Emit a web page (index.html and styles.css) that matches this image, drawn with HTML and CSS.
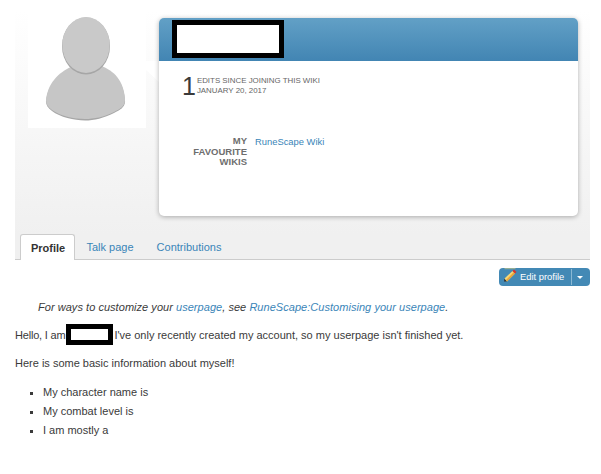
FILE: index.html
```html
<!DOCTYPE html>
<html lang="en">
<head>
    <meta charset="UTF-8">
    <title>User profile</title>
    <link rel="stylesheet" href="styles.css">
</head>
<body>
    <div class="page">
        <div class="masthead">
            <div class="avatar">
                <svg width="118" height="128" viewBox="0 0 118 128">
                    <path d="M18 101.500 C20 81 35 71 45 67 L73 67 C85 71 96 81 97 101.500 C97 107 92 110 86 113 C76 118 66 120.500 57 120.500 C46 120.500 32 117 24 111 C20 108 18 105 18 101.500 Z" fill="#a6a6a6"/>
                    <path d="M18 100 C20 80 35 70 45 66 L73 66 C85 70 96 80 97 100 C97 106 92 109 86 112 C76 117 66 119 57 119 C46 119 32 116 24 110 C20 107 18 104 18 100 Z" fill="#c6c6c6"/>
                    <ellipse cx="58" cy="46" rx="24" ry="28.500" fill="#a6a6a6"/>
                    <ellipse cx="58" cy="45" rx="23.700" ry="28" fill="#c9c9c9"/>
                </svg>
            </div>
            <div class="card">
                <div class="card-head">
                    <div class="redact redact-name"></div>
                </div>
                <div class="card-body">
                    <div class="edits">
                        <span class="edit-count">1</span>
                        <div class="edit-text">
                            <div>Edits since joining this wiki</div>
                            <div>January 20, 2017</div>
                        </div>
                    </div>
                    <div class="favourites">
                        <div class="fav-label">My Favourite Wikis</div>
                        <a class="link" href="#">RuneScape Wiki</a>
                    </div>
                </div>
            </div>
        </div>

        <ul class="tabs">
            <li class="tab tab-active">Profile</li>
            <li class="tab">Talk page</li>
            <li class="tab">Contributions</li>
        </ul>

        <div class="actions">
            <div class="edit-btn">
                <svg class="pencil" width="14" height="14" viewBox="0 0 14 14">
                    <path d="M1.500 0.700 L12.500 0.700" stroke="#a9b88f" stroke-width="1"/>
                    <path d="M4 13.500 L1 13.500 L1.500 10.500 Z" fill="#33302a"/>
                    <path d="M1.500 10.500 L9.500 3 L12 5.500 L4 13.500 Z" fill="#f7d774"/>
                    <path d="M3 12 L10.700 4.300 L12 5.500 L4 13.500 Z" fill="#e8a33a"/>
                    <path d="M9.500 3 L11 1.500 L13.500 4 L12 5.500 Z" fill="#d9342b"/>
                </svg>
                <span class="edit-label">Edit profile</span>
                <span class="edit-caret"></span>
            </div>
        </div>

        <div class="content">
            <p class="hint">For ways to customize your <a class="link" href="#">userpage</a>, see <a class="link" href="#">RuneScape:Customising your userpage</a>.</p>
            <p class="hello"><span class="hello-start">Hello, I am</span><span class="redact redact-inline"></span>I've only recently created my account, so my userpage isn't finished yet.</p>
            <p class="basics">Here is some basic information about myself!</p>
            <ul class="facts">
                <li>My character name is</li>
                <li>My combat level is</li>
                <li>I am mostly a</li>
            </ul>
        </div>
    </div>
</body>
</html>
```

FILE: styles.css
```css
body {
    margin: 0;
    background: white;
    font-family: "Liberation Sans", Arial, sans-serif;
    font-size: 12px;
    color: #3a3a3a;
    overflow: hidden;
}

.page {
    margin: 0 11px 0 15px;
}

.link {
    color: #3a85b8;
    text-decoration: none;
}

.redact {
    background: white;
    border: 5px solid black;
    box-sizing: border-box;
}

/* masthead */
.masthead {
    display: flex;
    height: 234px;
    background: linear-gradient(to bottom, #ffffff 0, #ffffff 10px, #f0f0f0 100%);
}

.avatar {
    width: 118px;
    height: 128px;
    margin-left: 13px;
    background: white;
    position: relative;
}

.avatar svg {
    display: block;
}

.avatar::after {
    content: "";
    position: absolute;
    left: 118px;
    top: 61px;
    width: 13px;
    height: 21px;
    background: white;
    clip-path: polygon(0 0, 100% 0, 100% 100%, 0 43%);
}

.card {
    width: 419px;
    height: 198px;
    margin: 18px 0 0 13px;
    background: white;
    border-radius: 5px;
    box-shadow: 0 1px 5px rgba(0,0,0,0.3);
    position: relative;
}

.card-head {
    height: 43px;
    padding: 2px 0 0 13px;
    box-sizing: border-box;
    background: linear-gradient(to bottom, #62a0c6 0%, #4285b3 100%);
    border-radius: 5px 5px 0 0;
}

.redact-name {
    width: 112px;
    height: 38px;
}

.card-body {
    padding: 13px 0 0 23px;
}

.edits {
    display: flex;
    align-items: center;
    gap: 1px;
}

.edit-count {
    font-size: 25px;
    line-height: 24px;
    color: #3a3a3a;
}

.edit-text {
    font-size: 7.900px;
    line-height: 10px;
    text-transform: uppercase;
    color: #666;
}

.favourites {
    display: flex;
    margin-top: 38px;
    gap: 8px;
}

.fav-label {
    width: 65px;
    text-align: right;
    font-size: 9.500px;
    font-weight: bold;
    line-height: 10.600px;
    text-transform: uppercase;
    color: #6e6e6e;
}

.favourites .link {
    font-size: 9.400px;
    line-height: 11px;
}

/* tabs */
.tabs {
    display: flex;
    list-style: none;
    margin: 0;
    padding: 0 0 0 5px;
    height: 25px;
    background: #f0f0f0;
    border-bottom: 1px solid #cccccc;
}

.tab {
    padding: 0 11.500px;
    line-height: 26px;
    color: #3a85b8;
    font-size: 11px;
}

.tab-active {
    width: 55px;
    height: 26px;
    box-sizing: border-box;
    padding: 0 0 0 10px;
    background: white;
    color: #333;
    font-weight: bold;
    border: 1px solid #cccccc;
    border-bottom: none;
    border-radius: 3px 3px 0 0;
}

/* edit button */
.actions {
    display: flex;
    justify-content: flex-end;
    padding-top: 8px;
}

.edit-btn {
    display: flex;
    align-items: center;
    width: 91px;
    height: 18px;
    box-sizing: border-box;
    padding-left: 4px;
    background: #4389b5;
    border-radius: 4px;
    color: white;
    font-size: 9.400px;
}

.pencil {
    flex: none;
    align-self: flex-start;
}

.edit-label {
    width: 51px;
    margin-left: 3px;
    height: 16px;
    line-height: 16px;
    border-right: 1px solid #8ab8d4;
}

.edit-caret {
    margin-left: 5px;
    border-left: 3px solid transparent;
    border-right: 3px solid transparent;
    border-top: 3px solid white;
}

/* page text */
.content {
    padding-top: 14px;
}

.content p {
    margin: 0;
    line-height: 15px;
    font-size: 11px;
}

.content .hint {
    font-style: italic;
    padding-left: 23px;
    margin-bottom: 9px;
    letter-spacing: 0.040px;
}

.content .hello {
    display: flex;
    align-items: center;
    height: 21px;
    box-sizing: border-box;
    padding-top: 2px;
    margin-bottom: 11px;
    white-space: pre;
}

.content .basics {
    margin-bottom: 14px;
}

.hello-start {
    letter-spacing: -0.200px;
}

.redact-inline {
    display: inline-block;
    width: 47px;
    height: 21px;
    margin: -2px 1px 0 1px;
}

.facts {
    list-style: square;
    margin: 0;
    padding-left: 28px;
    font-size: 11px;
}

.facts li {
    line-height: 15px;
    margin-bottom: 4px;
}
```
